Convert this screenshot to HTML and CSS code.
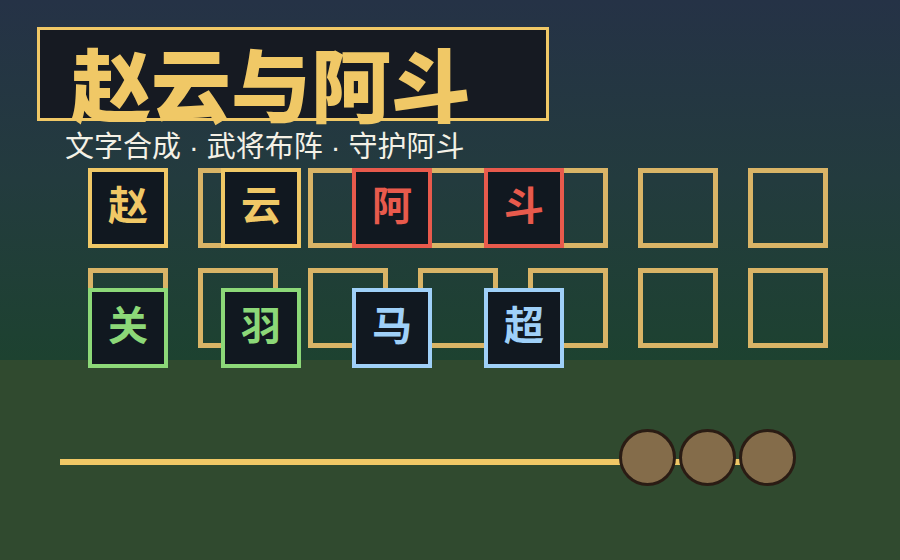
FILE: index.html
```html
<!DOCTYPE html>
<html lang="zh-CN">
<head>
  <meta charset="UTF-8" />
  <meta name="viewport" content="width=device-width, initial-scale=1.0"/>
  <title>赵云与阿斗</title>
  <link rel="stylesheet" href="styles.css">
</head>
<body>

  <div class="scene">

    <!-- Title -->
    <header class="title-box">
      <h1>赵云与阿斗</h1>
    </header>
    <p class="subtitle">文字合成 · 武将布阵 · 守护阿斗</p>

    <!-- Board: empty slots with the character tiles on top -->
    <div class="board">
      <div class="slots">
        <div class="slot"></div><div class="slot"></div><div class="slot"></div><div class="slot"></div>
        <div class="slot"></div><div class="slot"></div><div class="slot"></div>
        <div class="slot"></div><div class="slot"></div><div class="slot"></div><div class="slot"></div>
        <div class="slot"></div><div class="slot"></div><div class="slot"></div>
      </div>

      <div class="tile gold" style="left: 0; top: 0;">赵</div>
      <div class="tile gold" style="left: 133px; top: 0;">云</div>
      <div class="tile red" style="left: 264px; top: 0;">阿</div>
      <div class="tile red" style="left: 396px; top: 0;">斗</div>

      <div class="tile green" style="left: 0; top: 120px;">关</div>
      <div class="tile green" style="left: 133px; top: 120px;">羽</div>
      <div class="tile blue" style="left: 264px; top: 120px;">马</div>
      <div class="tile blue" style="left: 396px; top: 120px;">超</div>
    </div>

    <!-- Rope with stones -->
    <div class="rope">
      <span class="stone"></span>
      <span class="stone"></span>
      <span class="stone"></span>
    </div>

  </div>

</body>
</html>
```

FILE: styles.css
```css
* {
  box-sizing: border-box;
  margin: 0;
  padding: 0;
}

body {
  font-family: "Noto Sans CJK SC", "Noto Sans", sans-serif;
  background: #304a2f;
}

.scene {
  width: 900px;
  height: 560px;
  overflow: hidden;
  display: flex;
  flex-direction: column;
  align-items: flex-start;
  background:
    linear-gradient(to bottom, #253246 0, #233b3e 180px, #1d4230 360px, #304a2f 360px, #304a2f 100%);
}

/* Title */
.title-box {
  width: 512px;
  height: 94px;
  margin: 27px 0 0 37px;
  padding: 16px 0 0 31px;
  background: #161a22;
  border: 3px solid #f0c866;
}

.title-box h1 {
  font-size: 80px;
  line-height: 70px;
  font-weight: 900;
  color: #f0c866;
  white-space: nowrap;
}

/* latin spaces and dots come from Liberation Sans, so the separators stay narrow */
.subtitle {
  margin: 12px 0 0 65px;
  font-family: "Liberation Sans", "Noto Sans CJK SC", sans-serif;
  font-size: 29px;
  line-height: 29px;
  color: #f4f1e6;
  white-space: nowrap;
}

/* Board */
.board {
  position: relative;
  margin: 6px 0 0 88px;
}

.slots {
  display: grid;
  grid-template-columns: repeat(7, 80px);
  grid-auto-rows: 80px;
  column-gap: 30px;
  row-gap: 20px;
}

.slot {
  border: 5px solid #d9b466;
}

.tile {
  position: absolute;
  width: 80px;
  height: 80px;
  display: flex;
  align-items: center;
  justify-content: center;
  padding-bottom: 10px;
  background: #111820;
  border: 4px solid;
  font-size: 40px;
  line-height: 40px;
  font-weight: 700;
}

.tile.gold  { color: #f0c866; border-color: #f0c866; }
.tile.red   { color: #e85a4c; border-color: #e85a4c; }
.tile.green { color: #8cd878; border-color: #8cd878; }
.tile.blue  { color: #9fd0f8; border-color: #9fd0f8; }

/* Rope */
.rope {
  display: flex;
  justify-content: flex-end;
  gap: 3px;
  width: 736px;
  height: 57px;
  margin: 81px 0 0 60px;
  background: linear-gradient(to bottom, transparent 30px, #f0c866 30px, #f0c866 36px, transparent 36px) no-repeat;
  background-size: 680px 100%;
}

.stone {
  width: 57px;
  height: 57px;
  border-radius: 50%;
  background: #846c4a;
  border: 3px solid #2a1c14;
}
```
